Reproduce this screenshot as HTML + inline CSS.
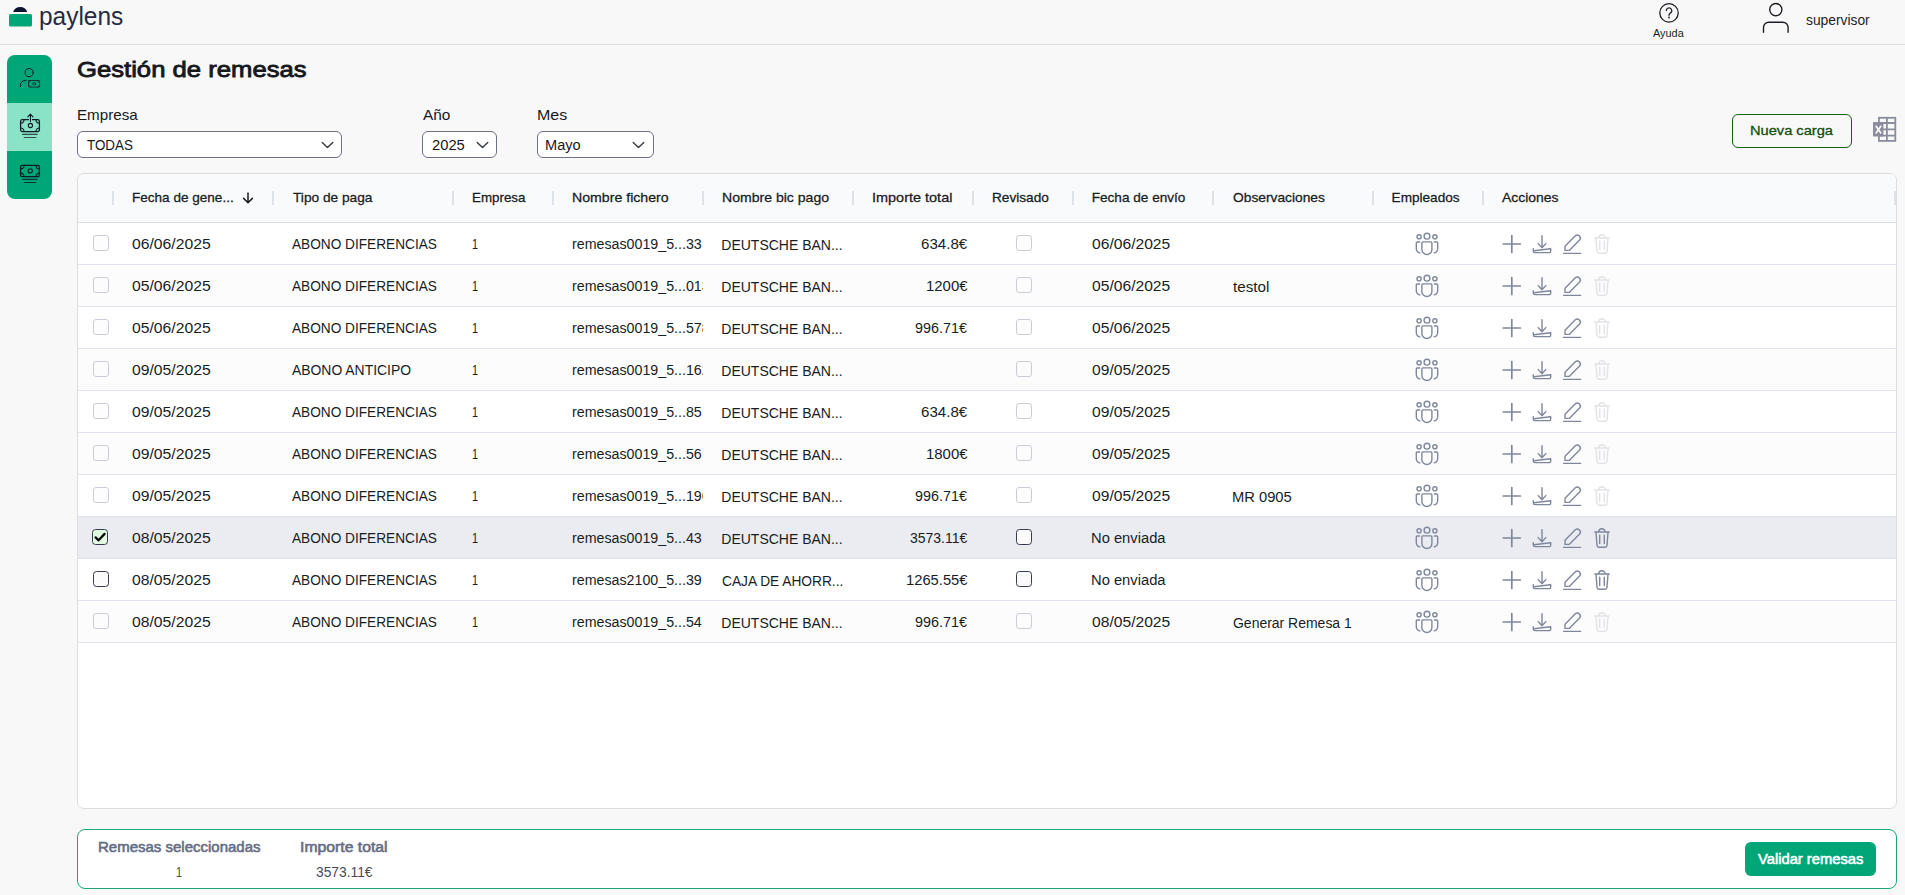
<!DOCTYPE html>
<html lang="es">
<head>
<meta charset="utf-8">
<title>Gestión de remesas - paylens</title>
<style>
*{box-sizing:border-box;margin:0;padding:0}
html,body{width:1905px;height:895px;overflow:hidden}
body{position:relative;background:#f8f8f8;font-family:"Liberation Sans",sans-serif;color:#181d1f;font-size:14px}
span{position:absolute;white-space:nowrap;line-height:1;transform-origin:0 0}
div,svg{position:absolute}
svg{overflow:visible}
.hdrline{left:0;top:44px;width:1905px;height:1px;background:#dcdcdc}
.side{left:7px;top:55px;width:45px;height:144px;border-radius:8px;background:#00a676;overflow:hidden}
.side .act{left:0;top:48px;width:45px;height:48px;background:#8ae3c7}
.sel{height:27px;top:131px;border:1px solid #6c7186;border-radius:6px;background:#fff}
.btn-o{left:1732px;top:114px;width:120px;height:34px;border:1px solid #14600f;border-radius:6px}
.grid{left:77px;top:173px;width:1820px;height:636px;border:1px solid #dddddd;border-radius:7px;background:#fff;overflow:hidden}
.ghead{left:0;top:0;width:1818px;height:49px;background:#f9fafc;border-bottom:1px solid #dfdfdf}
.sep{top:17px;width:2px;height:14px;background:#dde2eb}
.row{left:0;width:1818px;height:42px;border-bottom:1px solid #dde2eb;background:#fff}
.row.alt{background:#fcfcfc}
.row.selr{background:#ebecf1}
.cb{width:16px;height:16px;border:1px solid #cacdd5;border-radius:3px;background:#fdfdfd}
.row.alt .cb{background:#fcfcfc}
.cb.en{border:1.4px solid #363b50;border-radius:3.5px;background:#fbfbfb}
.cb.ck{background:#e2fbe0}
.foot{left:77px;top:829px;width:1820px;height:60px;border:1px solid #1aa67b;border-radius:8px;background:#fff}
.btn-g{left:1745px;top:842px;width:131px;height:34px;border-radius:6px;background:#00a676}
</style>
</head>
<body>
<div class="hdrline"></div>
<svg style="left:0;top:0" width="40" height="40" viewBox="0 0 40 40"><path d="M13.1 11.9 A7.6 7.6 0 0 1 27.3 11.9 Z" fill="#0d1330"/><rect x="9" y="14" width="23" height="12.5" rx="1.6" fill="#00a676"/></svg>
<span style="left:39.04px;top:3.51px;font-size:25.5px;color:#262b40;transform:scaleX(0.9589);">paylens</span>
<svg style="left:1655px;top:0" width="30" height="26" viewBox="1655 0 30 26" fill="none" stroke="#1d1f24" stroke-width="1.3" stroke-linecap="round" stroke-linejoin="round"><circle cx="1669" cy="12.9" r="9.2"/><path d="M1666.3 10.6 a2.75 2.75 0 1 1 4.3 2.3 c-1 .7-1.6 1.2-1.6 2.4"/><circle cx="1669" cy="17.6" r=".35"/></svg>
<span style="left:1653.20px;top:27.59px;font-size:11px;color:#1d1f24;transform:scaleX(0.9914);">Ayuda</span>
<svg style="left:1760px;top:0" width="32" height="36" viewBox="1760 0 32 36" fill="none" stroke="#1d1f24" stroke-width="1.4" stroke-linecap="round"><circle cx="1775.8" cy="9.6" r="6.1"/><path d="M1763.5 32.2 V27.6 a5.3 5.3 0 0 1 5.3 -5.3 H1782.8 a5.3 5.3 0 0 1 5.3 5.3 V32.2"/></svg>
<span style="left:1806.20px;top:13.15px;color:#1d1f24;transform:scaleX(0.9859);">supervisor</span>
<div class="side"><div class="act"></div></div>
<svg style="left:7px;top:55px" width="45" height="48" viewBox="7 55 45 48" fill="none" stroke="#0f1a26" stroke-width="1" stroke-linecap="round"><circle cx="29.2" cy="72.6" r="4.1"/><path d="M20.4 86.6 V85.4 a5 5 0 0 1 5 -5 H26.2"/><rect x="28.6" y="80.5" width="11" height="6.6" rx=".6" stroke-width=".9" stroke-opacity=".85"/><circle cx="34.1" cy="83.8" r="1.4" stroke-width=".8" stroke-opacity=".85"/><path d="M28.6 82.4 a2 2 0 0 0 2 -2 M39.6 82.4 a2 2 0 0 1 -2 -2 M28.6 85.2 a2 2 0 0 1 2 2 M39.6 85.2 a2 2 0 0 0 -2 2" stroke-width=".7" stroke-opacity=".7"/></svg>
<svg style="left:7px;top:103px" width="45" height="48" viewBox="7 103 45 48" fill="none" stroke="#0f1a26" stroke-width="1.1" stroke-linecap="round" stroke-linejoin="round"><path d="M28.4 119.6 H22.4 a1.8 1.8 0 0 0 -1.8 1.8 V129.79999999999998 a1.8 1.8 0 0 0 1.8 1.8 H37.6 a1.8 1.8 0 0 0 1.8 -1.8 V121.39999999999999 a1.8 1.8 0 0 0 -1.8 -1.8 H32.4" stroke-width="1.3"/><path d="M20.6 123.19999999999999 a3.4 3.4 0 0 0 3.4 -3.4 M39.4 123.19999999999999 a3.4 3.4 0 0 1 -3.4 -3.4 M20.6 128.0 a3.4 3.4 0 0 1 3.4 3.4 M39.4 128.0 a3.4 3.4 0 0 0 -3.4 3.4" stroke-width="1.1"/><circle cx="30.4" cy="125.5" r="2.1"/><path d="M30.4 121.6 V114.2 M27.8 116.8 L30.4 114.2 L33 116.8"/><path d="M22.6 134.4 H37.2 M24.2 137.5 H35.8" stroke-opacity=".75"/></svg>
<svg style="left:7px;top:151px" width="45" height="48" viewBox="7 151 45 48" fill="none" stroke="#0f1a26" stroke-width="1.1" stroke-linecap="round" stroke-linejoin="round"><path d="M22.4 165.3 a1.8 1.8 0 0 0 -1.8 1.8 V174.9 a1.8 1.8 0 0 0 1.8 1.8 H37.6 a1.8 1.8 0 0 0 1.8 -1.8 V167.10000000000002 a1.8 1.8 0 0 0 -1.8 -1.8 Z" stroke-width="1.3"/><path d="M20.6 168.9 a3.4 3.4 0 0 0 3.4 -3.4 M39.4 168.9 a3.4 3.4 0 0 1 -3.4 -3.4 M20.6 173.10000000000002 a3.4 3.4 0 0 1 3.4 3.4 M39.4 173.10000000000002 a3.4 3.4 0 0 0 -3.4 3.4" stroke-width="1.1"/><circle cx="30.2" cy="170.8" r="2.1"/><path d="M22.6 179.4 H37 M24.2 182.5 H35.8" stroke-opacity=".8"/></svg>
<span style="left:77.37px;top:58.10px;font-size:22.8px;color:#16181d;transform:scaleX(1.1253);-webkit-text-stroke:0.85px #16181d;">Gestión de remesas</span>
<span style="left:76.59px;top:107.20px;font-size:15px;color:#16181d;transform:scaleX(1.0104);">Empresa</span>
<span style="left:422.60px;top:107.20px;font-size:15px;color:#16181d;transform:scaleX(1.0248);">Año</span>
<span style="left:536.53px;top:107.20px;font-size:15px;color:#16181d;transform:scaleX(1.0694);">Mes</span>
<div class="sel" style="left:77px;width:265px"></div>
<span style="left:87.40px;top:137.75px;color:#16181d;transform:scaleX(0.9572);">TODAS</span>
<svg style="left:320.5px;top:141px" width="13" height="8" viewBox="0 0 13 8" fill="none" stroke="#343a40" stroke-width="1.35" stroke-linecap="round" stroke-linejoin="round"><path d="M1.2 1.4 L6.5 6.6 L11.8 1.4"/></svg>
<div class="sel" style="left:422px;width:75px"></div>
<span style="left:431.60px;top:137.75px;color:#16181d;transform:scaleX(1.0523);">2025</span>
<svg style="left:475.5px;top:141px" width="13" height="8" viewBox="0 0 13 8" fill="none" stroke="#343a40" stroke-width="1.35" stroke-linecap="round" stroke-linejoin="round"><path d="M1.2 1.4 L6.5 6.6 L11.8 1.4"/></svg>
<div class="sel" style="left:537px;width:117px"></div>
<span style="left:545.46px;top:137.75px;color:#16181d;transform:scaleX(1.0404);">Mayo</span>
<svg style="left:632px;top:141px" width="13" height="8" viewBox="0 0 13 8" fill="none" stroke="#343a40" stroke-width="1.35" stroke-linecap="round" stroke-linejoin="round"><path d="M1.2 1.4 L6.5 6.6 L11.8 1.4"/></svg>
<div class="btn-o"></div>
<span style="left:1749.83px;top:124.20px;font-size:13.7px;color:#114d0d;transform:scaleX(1.0689);-webkit-text-stroke:0.3px #114d0d;">Nueva carga</span>
<svg style="left:1870px;top:115px" width="28" height="28" viewBox="1870 115 28 28"><g fill="none" stroke="#8a8d9e" stroke-width="1.8"><rect x="1878.9" y="117.8" width="16.4" height="23.1"/><path d="M1886.9 117.8 V140.9 M1878.9 123 H1895.3 M1878.9 129.3 H1895.3 M1878.9 135.6 H1895.3"/></g><rect x="1873" y="122.1" width="10.4" height="14.5" rx=".6" fill="#8a8d9e"/><path d="M1875.7 125.7 L1881.2 133.5 M1881.2 125.7 L1875.7 133.5" stroke="#f8f8f8" stroke-width="1.7" fill="none"/></svg>
<div class="grid"><div class="ghead"></div>
<div class="sep" style="left:34px"></div>
<div class="sep" style="left:194px"></div>
<div class="sep" style="left:374px"></div>
<div class="sep" style="left:474px"></div>
<div class="sep" style="left:624px"></div>
<div class="sep" style="left:774px"></div>
<div class="sep" style="left:894px"></div>
<div class="sep" style="left:994px"></div>
<div class="sep" style="left:1134px"></div>
<div class="sep" style="left:1294px"></div>
<div class="sep" style="left:1404px"></div>
<div class="sep" style="left:1816px"></div>
<div class="row" style="top:49px"><div class="cb" style="left:15px;top:12px"></div><div class="cb" style="left:938px;top:12px"></div></div>
<div class="row alt" style="top:91px"><div class="cb" style="left:15px;top:12px"></div><div class="cb" style="left:938px;top:12px"></div></div>
<div class="row" style="top:133px"><div class="cb" style="left:15px;top:12px"></div><div class="cb" style="left:938px;top:12px"></div></div>
<div class="row alt" style="top:175px"><div class="cb" style="left:15px;top:12px"></div><div class="cb" style="left:938px;top:12px"></div></div>
<div class="row" style="top:217px"><div class="cb" style="left:15px;top:12px"></div><div class="cb" style="left:938px;top:12px"></div></div>
<div class="row alt" style="top:259px"><div class="cb" style="left:15px;top:12px"></div><div class="cb" style="left:938px;top:12px"></div></div>
<div class="row" style="top:301px"><div class="cb" style="left:15px;top:12px"></div><div class="cb" style="left:938px;top:12px"></div></div>
<div class="row selr" style="top:343px"><div class="cb en ck" style="left:14px;top:12px"></div><div class="cb en" style="left:938px;top:12px"></div></div>
<div class="row" style="top:385px"><div class="cb en" style="left:15px;top:12px"></div><div class="cb en" style="left:938px;top:12px"></div></div>
<div class="row alt" style="top:427px"><div class="cb" style="left:15px;top:12px"></div><div class="cb" style="left:938px;top:12px"></div></div>
</div>
<span style="left:131.80px;top:191.09px;font-size:13.6px;transform:scaleX(0.9965);-webkit-text-stroke:0.28px #181d1f;">Fecha de gene...</span>
<span style="left:292.80px;top:191.09px;font-size:13.6px;transform:scaleX(1.0076);-webkit-text-stroke:0.28px #181d1f;">Tipo de paga</span>
<span style="left:471.62px;top:191.09px;font-size:13.6px;transform:scaleX(0.9826);-webkit-text-stroke:0.28px #181d1f;">Empresa</span>
<span style="left:571.56px;top:191.09px;font-size:13.6px;transform:scaleX(1.0398);-webkit-text-stroke:0.28px #181d1f;">Nombre fichero</span>
<span style="left:721.57px;top:191.09px;font-size:13.6px;transform:scaleX(1.0337);-webkit-text-stroke:0.28px #181d1f;">Nombre bic pago</span>
<span style="left:871.54px;top:191.09px;font-size:13.6px;transform:scaleX(1.0639);-webkit-text-stroke:0.28px #181d1f;">Importe total</span>
<span style="left:991.80px;top:191.09px;font-size:13.6px;transform:scaleX(1.0034);-webkit-text-stroke:0.28px #181d1f;">Revisado</span>
<span style="left:1091.70px;top:191.09px;font-size:13.6px;-webkit-text-stroke:0.28px #181d1f;">Fecha de envío</span>
<span style="left:1232.80px;top:191.09px;font-size:13.6px;transform:scaleX(1.0135);-webkit-text-stroke:0.28px #181d1f;">Observaciones</span>
<span style="left:1391.60px;top:191.09px;font-size:13.6px;-webkit-text-stroke:0.28px #181d1f;">Empleados</span>
<span style="left:1502.30px;top:191.09px;font-size:13.6px;transform:scaleX(1.0242);-webkit-text-stroke:0.28px #181d1f;">Acciones</span>
<svg style="left:240px;top:190px" width="16" height="16" viewBox="240 190 16 16" fill="none" stroke="#181d1f" stroke-width="1.5" stroke-linecap="round" stroke-linejoin="round"><path d="M248 192.9 V202.6 M243.6 198.4 L248 202.8 L252.4 198.4"/></svg>
<span style="left:132.10px;top:236.85px;transform:scaleX(1.1226);">06/06/2025</span>
<span style="left:292.20px;top:236.85px;transform:scaleX(0.9754);">ABONO DIFERENCIAS</span>
<span style="left:471.63px;top:236.85px;transform:scaleX(0.7714);">1</span>
<div style="left:560px;top:223px;width:143px;height:41px;overflow:hidden">
<span style="left:12.40px;top:13.85px;transform:scaleX(1.0168);">remesas0019_5...33</span>
</div>
<span style="left:721.30px;top:237.85px;">DEUTSCHE BAN...</span>
<span style="left:921.00px;top:236.85px;transform:scaleX(1.0782);">634.8€</span>
<span style="left:1092.40px;top:236.85px;transform:scaleX(1.1169);">06/06/2025</span>
<svg style="left:1413px;top:230px" width="28" height="28" viewBox="0 0 28 28" fill="none" stroke="#7f879d" stroke-width="1.4" stroke-linecap="round" stroke-linejoin="round"><circle cx="14" cy="6.2" r="2.9"/><circle cx="6.1" cy="6.8" r="2.1"/><circle cx="21.9" cy="6.8" r="2.1"/><path d="M10.1 11.9 H17.9 a1 1 0 0 1 1 1 V19.5 a5 5 0 0 1 -10 0 V12.9 a1 1 0 0 1 1 -1 Z"/><path d="M6.6 12 H4.3 a1 1 0 0 0 -1 1 V18.4 a4.7 4.7 0 0 0 3.5 4.5 M21.4 12 H23.7 a1 1 0 0 1 1 1 V18.4 a4.7 4.7 0 0 1 -3.5 4.5"/></svg>
<svg style="left:1500px;top:231px" width="114" height="26" viewBox="1500 231 114 26" fill="none" stroke="#7f879d" stroke-width="1.5" stroke-linecap="round" stroke-linejoin="round"><path d="M1503.3 244 H1520.3 M1511.8 235.5 V252.5" stroke-width="1.7"/><path d="M1542 235.6 V247.6 M1538.2 243.6 L1542 247.8 L1545.8 243.6 M1533.3 248.6 V251 a1.6 1.6 0 0 0 1.6 1.6 H1549.1 a1.6 1.6 0 0 0 1.6 -1.6 V248.6 M1534 250.8 L1550.4 248.7" stroke-width="1.4"/><path d="M1565 250.4 V246.2 L1575.3 235.8 a3.05 3.05 0 0 1 4.3 4.3 L1569.2 250.4 Z M1563.6 253.4 H1580.6" stroke-width="1.4"/><path stroke="#e2e3e6" d="M1594.8 238 H1609.2 M1598.8 237.8 a3.2 3 0 0 1 6.4 0 M1596 238.2 L1597 251.4 a2 2 0 0 0 2 1.8 H1605 a2 2 0 0 0 2 -1.8 L1608 238.2 M1599.7 241.2 V249.6 M1604.3 241.2 V249.6" stroke-width="1.4"/></svg>
<span style="left:132.10px;top:278.85px;transform:scaleX(1.1226);">05/06/2025</span>
<span style="left:292.20px;top:278.85px;transform:scaleX(0.9754);">ABONO DIFERENCIAS</span>
<span style="left:471.63px;top:278.85px;transform:scaleX(0.7714);">1</span>
<div style="left:560px;top:265px;width:143px;height:41px;overflow:hidden">
<span style="left:12.40px;top:13.85px;transform:scaleX(1.0168);">remesas0019_5...013</span>
</div>
<span style="left:721.30px;top:279.85px;">DEUTSCHE BAN...</span>
<span style="left:925.63px;top:278.85px;transform:scaleX(1.0670);">1200€</span>
<span style="left:1092.40px;top:278.85px;transform:scaleX(1.1169);">05/06/2025</span>
<span style="left:1232.60px;top:279.85px;transform:scaleX(1.0854);">testol</span>
<svg style="left:1413px;top:272px" width="28" height="28" viewBox="0 0 28 28" fill="none" stroke="#7f879d" stroke-width="1.4" stroke-linecap="round" stroke-linejoin="round"><circle cx="14" cy="6.2" r="2.9"/><circle cx="6.1" cy="6.8" r="2.1"/><circle cx="21.9" cy="6.8" r="2.1"/><path d="M10.1 11.9 H17.9 a1 1 0 0 1 1 1 V19.5 a5 5 0 0 1 -10 0 V12.9 a1 1 0 0 1 1 -1 Z"/><path d="M6.6 12 H4.3 a1 1 0 0 0 -1 1 V18.4 a4.7 4.7 0 0 0 3.5 4.5 M21.4 12 H23.7 a1 1 0 0 1 1 1 V18.4 a4.7 4.7 0 0 1 -3.5 4.5"/></svg>
<svg style="left:1500px;top:273px" width="114" height="26" viewBox="1500 231 114 26" fill="none" stroke="#7f879d" stroke-width="1.5" stroke-linecap="round" stroke-linejoin="round"><path d="M1503.3 244 H1520.3 M1511.8 235.5 V252.5" stroke-width="1.7"/><path d="M1542 235.6 V247.6 M1538.2 243.6 L1542 247.8 L1545.8 243.6 M1533.3 248.6 V251 a1.6 1.6 0 0 0 1.6 1.6 H1549.1 a1.6 1.6 0 0 0 1.6 -1.6 V248.6 M1534 250.8 L1550.4 248.7" stroke-width="1.4"/><path d="M1565 250.4 V246.2 L1575.3 235.8 a3.05 3.05 0 0 1 4.3 4.3 L1569.2 250.4 Z M1563.6 253.4 H1580.6" stroke-width="1.4"/><path stroke="#e2e3e6" d="M1594.8 238 H1609.2 M1598.8 237.8 a3.2 3 0 0 1 6.4 0 M1596 238.2 L1597 251.4 a2 2 0 0 0 2 1.8 H1605 a2 2 0 0 0 2 -1.8 L1608 238.2 M1599.7 241.2 V249.6 M1604.3 241.2 V249.6" stroke-width="1.4"/></svg>
<span style="left:132.10px;top:320.85px;transform:scaleX(1.1226);">05/06/2025</span>
<span style="left:292.20px;top:320.85px;transform:scaleX(0.9754);">ABONO DIFERENCIAS</span>
<span style="left:471.63px;top:320.85px;transform:scaleX(0.7714);">1</span>
<div style="left:560px;top:307px;width:143px;height:41px;overflow:hidden">
<span style="left:12.40px;top:13.85px;transform:scaleX(1.0168);">remesas0019_5...578</span>
</div>
<span style="left:721.30px;top:321.85px;">DEUTSCHE BAN...</span>
<span style="left:915.30px;top:320.85px;transform:scaleX(1.0252);">996.71€</span>
<span style="left:1092.40px;top:320.85px;transform:scaleX(1.1169);">05/06/2025</span>
<svg style="left:1413px;top:314px" width="28" height="28" viewBox="0 0 28 28" fill="none" stroke="#7f879d" stroke-width="1.4" stroke-linecap="round" stroke-linejoin="round"><circle cx="14" cy="6.2" r="2.9"/><circle cx="6.1" cy="6.8" r="2.1"/><circle cx="21.9" cy="6.8" r="2.1"/><path d="M10.1 11.9 H17.9 a1 1 0 0 1 1 1 V19.5 a5 5 0 0 1 -10 0 V12.9 a1 1 0 0 1 1 -1 Z"/><path d="M6.6 12 H4.3 a1 1 0 0 0 -1 1 V18.4 a4.7 4.7 0 0 0 3.5 4.5 M21.4 12 H23.7 a1 1 0 0 1 1 1 V18.4 a4.7 4.7 0 0 1 -3.5 4.5"/></svg>
<svg style="left:1500px;top:315px" width="114" height="26" viewBox="1500 231 114 26" fill="none" stroke="#7f879d" stroke-width="1.5" stroke-linecap="round" stroke-linejoin="round"><path d="M1503.3 244 H1520.3 M1511.8 235.5 V252.5" stroke-width="1.7"/><path d="M1542 235.6 V247.6 M1538.2 243.6 L1542 247.8 L1545.8 243.6 M1533.3 248.6 V251 a1.6 1.6 0 0 0 1.6 1.6 H1549.1 a1.6 1.6 0 0 0 1.6 -1.6 V248.6 M1534 250.8 L1550.4 248.7" stroke-width="1.4"/><path d="M1565 250.4 V246.2 L1575.3 235.8 a3.05 3.05 0 0 1 4.3 4.3 L1569.2 250.4 Z M1563.6 253.4 H1580.6" stroke-width="1.4"/><path stroke="#e2e3e6" d="M1594.8 238 H1609.2 M1598.8 237.8 a3.2 3 0 0 1 6.4 0 M1596 238.2 L1597 251.4 a2 2 0 0 0 2 1.8 H1605 a2 2 0 0 0 2 -1.8 L1608 238.2 M1599.7 241.2 V249.6 M1604.3 241.2 V249.6" stroke-width="1.4"/></svg>
<span style="left:132.10px;top:362.85px;transform:scaleX(1.1226);">09/05/2025</span>
<span style="left:292.20px;top:362.85px;transform:scaleX(0.9935);">ABONO ANTICIPO</span>
<span style="left:471.63px;top:362.85px;transform:scaleX(0.7714);">1</span>
<div style="left:560px;top:349px;width:143px;height:41px;overflow:hidden">
<span style="left:12.40px;top:13.85px;transform:scaleX(1.0168);">remesas0019_5...162</span>
</div>
<span style="left:721.30px;top:363.85px;">DEUTSCHE BAN...</span>
<span style="left:1092.40px;top:362.85px;transform:scaleX(1.1169);">09/05/2025</span>
<svg style="left:1413px;top:356px" width="28" height="28" viewBox="0 0 28 28" fill="none" stroke="#7f879d" stroke-width="1.4" stroke-linecap="round" stroke-linejoin="round"><circle cx="14" cy="6.2" r="2.9"/><circle cx="6.1" cy="6.8" r="2.1"/><circle cx="21.9" cy="6.8" r="2.1"/><path d="M10.1 11.9 H17.9 a1 1 0 0 1 1 1 V19.5 a5 5 0 0 1 -10 0 V12.9 a1 1 0 0 1 1 -1 Z"/><path d="M6.6 12 H4.3 a1 1 0 0 0 -1 1 V18.4 a4.7 4.7 0 0 0 3.5 4.5 M21.4 12 H23.7 a1 1 0 0 1 1 1 V18.4 a4.7 4.7 0 0 1 -3.5 4.5"/></svg>
<svg style="left:1500px;top:357px" width="114" height="26" viewBox="1500 231 114 26" fill="none" stroke="#7f879d" stroke-width="1.5" stroke-linecap="round" stroke-linejoin="round"><path d="M1503.3 244 H1520.3 M1511.8 235.5 V252.5" stroke-width="1.7"/><path d="M1542 235.6 V247.6 M1538.2 243.6 L1542 247.8 L1545.8 243.6 M1533.3 248.6 V251 a1.6 1.6 0 0 0 1.6 1.6 H1549.1 a1.6 1.6 0 0 0 1.6 -1.6 V248.6 M1534 250.8 L1550.4 248.7" stroke-width="1.4"/><path d="M1565 250.4 V246.2 L1575.3 235.8 a3.05 3.05 0 0 1 4.3 4.3 L1569.2 250.4 Z M1563.6 253.4 H1580.6" stroke-width="1.4"/><path stroke="#e2e3e6" d="M1594.8 238 H1609.2 M1598.8 237.8 a3.2 3 0 0 1 6.4 0 M1596 238.2 L1597 251.4 a2 2 0 0 0 2 1.8 H1605 a2 2 0 0 0 2 -1.8 L1608 238.2 M1599.7 241.2 V249.6 M1604.3 241.2 V249.6" stroke-width="1.4"/></svg>
<span style="left:132.10px;top:404.85px;transform:scaleX(1.1226);">09/05/2025</span>
<span style="left:292.20px;top:404.85px;transform:scaleX(0.9754);">ABONO DIFERENCIAS</span>
<span style="left:471.63px;top:404.85px;transform:scaleX(0.7714);">1</span>
<div style="left:560px;top:391px;width:143px;height:41px;overflow:hidden">
<span style="left:12.40px;top:13.85px;transform:scaleX(1.0168);">remesas0019_5...85</span>
</div>
<span style="left:721.30px;top:405.85px;">DEUTSCHE BAN...</span>
<span style="left:921.00px;top:404.85px;transform:scaleX(1.0782);">634.8€</span>
<span style="left:1092.40px;top:404.85px;transform:scaleX(1.1169);">09/05/2025</span>
<svg style="left:1413px;top:398px" width="28" height="28" viewBox="0 0 28 28" fill="none" stroke="#7f879d" stroke-width="1.4" stroke-linecap="round" stroke-linejoin="round"><circle cx="14" cy="6.2" r="2.9"/><circle cx="6.1" cy="6.8" r="2.1"/><circle cx="21.9" cy="6.8" r="2.1"/><path d="M10.1 11.9 H17.9 a1 1 0 0 1 1 1 V19.5 a5 5 0 0 1 -10 0 V12.9 a1 1 0 0 1 1 -1 Z"/><path d="M6.6 12 H4.3 a1 1 0 0 0 -1 1 V18.4 a4.7 4.7 0 0 0 3.5 4.5 M21.4 12 H23.7 a1 1 0 0 1 1 1 V18.4 a4.7 4.7 0 0 1 -3.5 4.5"/></svg>
<svg style="left:1500px;top:399px" width="114" height="26" viewBox="1500 231 114 26" fill="none" stroke="#7f879d" stroke-width="1.5" stroke-linecap="round" stroke-linejoin="round"><path d="M1503.3 244 H1520.3 M1511.8 235.5 V252.5" stroke-width="1.7"/><path d="M1542 235.6 V247.6 M1538.2 243.6 L1542 247.8 L1545.8 243.6 M1533.3 248.6 V251 a1.6 1.6 0 0 0 1.6 1.6 H1549.1 a1.6 1.6 0 0 0 1.6 -1.6 V248.6 M1534 250.8 L1550.4 248.7" stroke-width="1.4"/><path d="M1565 250.4 V246.2 L1575.3 235.8 a3.05 3.05 0 0 1 4.3 4.3 L1569.2 250.4 Z M1563.6 253.4 H1580.6" stroke-width="1.4"/><path stroke="#e2e3e6" d="M1594.8 238 H1609.2 M1598.8 237.8 a3.2 3 0 0 1 6.4 0 M1596 238.2 L1597 251.4 a2 2 0 0 0 2 1.8 H1605 a2 2 0 0 0 2 -1.8 L1608 238.2 M1599.7 241.2 V249.6 M1604.3 241.2 V249.6" stroke-width="1.4"/></svg>
<span style="left:132.10px;top:446.85px;transform:scaleX(1.1226);">09/05/2025</span>
<span style="left:292.20px;top:446.85px;transform:scaleX(0.9754);">ABONO DIFERENCIAS</span>
<span style="left:471.63px;top:446.85px;transform:scaleX(0.7714);">1</span>
<div style="left:560px;top:433px;width:143px;height:41px;overflow:hidden">
<span style="left:12.40px;top:13.85px;transform:scaleX(1.0168);">remesas0019_5...56</span>
</div>
<span style="left:721.30px;top:447.85px;">DEUTSCHE BAN...</span>
<span style="left:925.63px;top:446.85px;transform:scaleX(1.0670);">1800€</span>
<span style="left:1092.40px;top:446.85px;transform:scaleX(1.1169);">09/05/2025</span>
<svg style="left:1413px;top:440px" width="28" height="28" viewBox="0 0 28 28" fill="none" stroke="#7f879d" stroke-width="1.4" stroke-linecap="round" stroke-linejoin="round"><circle cx="14" cy="6.2" r="2.9"/><circle cx="6.1" cy="6.8" r="2.1"/><circle cx="21.9" cy="6.8" r="2.1"/><path d="M10.1 11.9 H17.9 a1 1 0 0 1 1 1 V19.5 a5 5 0 0 1 -10 0 V12.9 a1 1 0 0 1 1 -1 Z"/><path d="M6.6 12 H4.3 a1 1 0 0 0 -1 1 V18.4 a4.7 4.7 0 0 0 3.5 4.5 M21.4 12 H23.7 a1 1 0 0 1 1 1 V18.4 a4.7 4.7 0 0 1 -3.5 4.5"/></svg>
<svg style="left:1500px;top:441px" width="114" height="26" viewBox="1500 231 114 26" fill="none" stroke="#7f879d" stroke-width="1.5" stroke-linecap="round" stroke-linejoin="round"><path d="M1503.3 244 H1520.3 M1511.8 235.5 V252.5" stroke-width="1.7"/><path d="M1542 235.6 V247.6 M1538.2 243.6 L1542 247.8 L1545.8 243.6 M1533.3 248.6 V251 a1.6 1.6 0 0 0 1.6 1.6 H1549.1 a1.6 1.6 0 0 0 1.6 -1.6 V248.6 M1534 250.8 L1550.4 248.7" stroke-width="1.4"/><path d="M1565 250.4 V246.2 L1575.3 235.8 a3.05 3.05 0 0 1 4.3 4.3 L1569.2 250.4 Z M1563.6 253.4 H1580.6" stroke-width="1.4"/><path stroke="#e2e3e6" d="M1594.8 238 H1609.2 M1598.8 237.8 a3.2 3 0 0 1 6.4 0 M1596 238.2 L1597 251.4 a2 2 0 0 0 2 1.8 H1605 a2 2 0 0 0 2 -1.8 L1608 238.2 M1599.7 241.2 V249.6 M1604.3 241.2 V249.6" stroke-width="1.4"/></svg>
<span style="left:132.10px;top:488.85px;transform:scaleX(1.1226);">09/05/2025</span>
<span style="left:292.20px;top:488.85px;transform:scaleX(0.9754);">ABONO DIFERENCIAS</span>
<span style="left:471.63px;top:488.85px;transform:scaleX(0.7714);">1</span>
<div style="left:560px;top:475px;width:143px;height:41px;overflow:hidden">
<span style="left:12.40px;top:13.85px;transform:scaleX(1.0168);">remesas0019_5...196</span>
</div>
<span style="left:721.30px;top:489.85px;">DEUTSCHE BAN...</span>
<span style="left:915.30px;top:488.85px;transform:scaleX(1.0252);">996.71€</span>
<span style="left:1092.40px;top:488.85px;transform:scaleX(1.1169);">09/05/2025</span>
<span style="left:1231.55px;top:489.85px;transform:scaleX(1.0514);">MR 0905</span>
<svg style="left:1413px;top:482px" width="28" height="28" viewBox="0 0 28 28" fill="none" stroke="#7f879d" stroke-width="1.4" stroke-linecap="round" stroke-linejoin="round"><circle cx="14" cy="6.2" r="2.9"/><circle cx="6.1" cy="6.8" r="2.1"/><circle cx="21.9" cy="6.8" r="2.1"/><path d="M10.1 11.9 H17.9 a1 1 0 0 1 1 1 V19.5 a5 5 0 0 1 -10 0 V12.9 a1 1 0 0 1 1 -1 Z"/><path d="M6.6 12 H4.3 a1 1 0 0 0 -1 1 V18.4 a4.7 4.7 0 0 0 3.5 4.5 M21.4 12 H23.7 a1 1 0 0 1 1 1 V18.4 a4.7 4.7 0 0 1 -3.5 4.5"/></svg>
<svg style="left:1500px;top:483px" width="114" height="26" viewBox="1500 231 114 26" fill="none" stroke="#7f879d" stroke-width="1.5" stroke-linecap="round" stroke-linejoin="round"><path d="M1503.3 244 H1520.3 M1511.8 235.5 V252.5" stroke-width="1.7"/><path d="M1542 235.6 V247.6 M1538.2 243.6 L1542 247.8 L1545.8 243.6 M1533.3 248.6 V251 a1.6 1.6 0 0 0 1.6 1.6 H1549.1 a1.6 1.6 0 0 0 1.6 -1.6 V248.6 M1534 250.8 L1550.4 248.7" stroke-width="1.4"/><path d="M1565 250.4 V246.2 L1575.3 235.8 a3.05 3.05 0 0 1 4.3 4.3 L1569.2 250.4 Z M1563.6 253.4 H1580.6" stroke-width="1.4"/><path stroke="#e2e3e6" d="M1594.8 238 H1609.2 M1598.8 237.8 a3.2 3 0 0 1 6.4 0 M1596 238.2 L1597 251.4 a2 2 0 0 0 2 1.8 H1605 a2 2 0 0 0 2 -1.8 L1608 238.2 M1599.7 241.2 V249.6 M1604.3 241.2 V249.6" stroke-width="1.4"/></svg>
<span style="left:132.10px;top:530.85px;transform:scaleX(1.1226);">08/05/2025</span>
<span style="left:292.20px;top:530.85px;transform:scaleX(0.9754);">ABONO DIFERENCIAS</span>
<span style="left:471.63px;top:530.85px;transform:scaleX(0.7714);">1</span>
<div style="left:560px;top:517px;width:143px;height:41px;overflow:hidden">
<span style="left:12.40px;top:13.85px;transform:scaleX(1.0168);">remesas0019_5...43</span>
</div>
<span style="left:721.30px;top:531.85px;">DEUTSCHE BAN...</span>
<span style="left:909.90px;top:530.85px;">3573.11€</span>
<span style="left:1091.35px;top:530.85px;transform:scaleX(1.0522);">No enviada</span>
<svg style="left:1413px;top:524px" width="28" height="28" viewBox="0 0 28 28" fill="none" stroke="#7f879d" stroke-width="1.4" stroke-linecap="round" stroke-linejoin="round"><circle cx="14" cy="6.2" r="2.9"/><circle cx="6.1" cy="6.8" r="2.1"/><circle cx="21.9" cy="6.8" r="2.1"/><path d="M10.1 11.9 H17.9 a1 1 0 0 1 1 1 V19.5 a5 5 0 0 1 -10 0 V12.9 a1 1 0 0 1 1 -1 Z"/><path d="M6.6 12 H4.3 a1 1 0 0 0 -1 1 V18.4 a4.7 4.7 0 0 0 3.5 4.5 M21.4 12 H23.7 a1 1 0 0 1 1 1 V18.4 a4.7 4.7 0 0 1 -3.5 4.5"/></svg>
<svg style="left:1500px;top:525px" width="114" height="26" viewBox="1500 231 114 26" fill="none" stroke="#7f879d" stroke-width="1.5" stroke-linecap="round" stroke-linejoin="round"><path d="M1503.3 244 H1520.3 M1511.8 235.5 V252.5" stroke-width="1.7"/><path d="M1542 235.6 V247.6 M1538.2 243.6 L1542 247.8 L1545.8 243.6 M1533.3 248.6 V251 a1.6 1.6 0 0 0 1.6 1.6 H1549.1 a1.6 1.6 0 0 0 1.6 -1.6 V248.6 M1534 250.8 L1550.4 248.7" stroke-width="1.4"/><path d="M1565 250.4 V246.2 L1575.3 235.8 a3.05 3.05 0 0 1 4.3 4.3 L1569.2 250.4 Z M1563.6 253.4 H1580.6" stroke-width="1.4"/><path stroke="#7f879d" d="M1594.8 238 H1609.2 M1598.8 237.8 a3.2 3 0 0 1 6.4 0 M1596 238.2 L1597 251.4 a2 2 0 0 0 2 1.8 H1605 a2 2 0 0 0 2 -1.8 L1608 238.2 M1599.7 241.2 V249.6 M1604.3 241.2 V249.6" stroke-width="1.4"/></svg>
<span style="left:132.10px;top:572.85px;transform:scaleX(1.1226);">08/05/2025</span>
<span style="left:292.20px;top:572.85px;transform:scaleX(0.9754);">ABONO DIFERENCIAS</span>
<span style="left:471.63px;top:572.85px;transform:scaleX(0.7714);">1</span>
<div style="left:560px;top:559px;width:143px;height:41px;overflow:hidden">
<span style="left:12.40px;top:13.85px;transform:scaleX(1.0168);">remesas2100_5...39</span>
</div>
<span style="left:722.30px;top:573.85px;transform:scaleX(0.9803);">CAJA DE AHORR...</span>
<span style="left:905.65px;top:572.85px;transform:scaleX(1.0537);">1265.55€</span>
<span style="left:1091.35px;top:572.85px;transform:scaleX(1.0522);">No enviada</span>
<svg style="left:1413px;top:566px" width="28" height="28" viewBox="0 0 28 28" fill="none" stroke="#7f879d" stroke-width="1.4" stroke-linecap="round" stroke-linejoin="round"><circle cx="14" cy="6.2" r="2.9"/><circle cx="6.1" cy="6.8" r="2.1"/><circle cx="21.9" cy="6.8" r="2.1"/><path d="M10.1 11.9 H17.9 a1 1 0 0 1 1 1 V19.5 a5 5 0 0 1 -10 0 V12.9 a1 1 0 0 1 1 -1 Z"/><path d="M6.6 12 H4.3 a1 1 0 0 0 -1 1 V18.4 a4.7 4.7 0 0 0 3.5 4.5 M21.4 12 H23.7 a1 1 0 0 1 1 1 V18.4 a4.7 4.7 0 0 1 -3.5 4.5"/></svg>
<svg style="left:1500px;top:567px" width="114" height="26" viewBox="1500 231 114 26" fill="none" stroke="#7f879d" stroke-width="1.5" stroke-linecap="round" stroke-linejoin="round"><path d="M1503.3 244 H1520.3 M1511.8 235.5 V252.5" stroke-width="1.7"/><path d="M1542 235.6 V247.6 M1538.2 243.6 L1542 247.8 L1545.8 243.6 M1533.3 248.6 V251 a1.6 1.6 0 0 0 1.6 1.6 H1549.1 a1.6 1.6 0 0 0 1.6 -1.6 V248.6 M1534 250.8 L1550.4 248.7" stroke-width="1.4"/><path d="M1565 250.4 V246.2 L1575.3 235.8 a3.05 3.05 0 0 1 4.3 4.3 L1569.2 250.4 Z M1563.6 253.4 H1580.6" stroke-width="1.4"/><path stroke="#7f879d" d="M1594.8 238 H1609.2 M1598.8 237.8 a3.2 3 0 0 1 6.4 0 M1596 238.2 L1597 251.4 a2 2 0 0 0 2 1.8 H1605 a2 2 0 0 0 2 -1.8 L1608 238.2 M1599.7 241.2 V249.6 M1604.3 241.2 V249.6" stroke-width="1.4"/></svg>
<span style="left:132.10px;top:614.85px;transform:scaleX(1.1226);">08/05/2025</span>
<span style="left:292.20px;top:614.85px;transform:scaleX(0.9754);">ABONO DIFERENCIAS</span>
<span style="left:471.63px;top:614.85px;transform:scaleX(0.7714);">1</span>
<div style="left:560px;top:601px;width:143px;height:41px;overflow:hidden">
<span style="left:12.40px;top:13.85px;transform:scaleX(1.0168);">remesas0019_5...54</span>
</div>
<span style="left:721.30px;top:615.85px;">DEUTSCHE BAN...</span>
<span style="left:915.30px;top:614.85px;transform:scaleX(1.0252);">996.71€</span>
<span style="left:1092.40px;top:614.85px;transform:scaleX(1.1169);">08/05/2025</span>
<span style="left:1232.60px;top:615.85px;transform:scaleX(0.9977);">Generar Remesa 1</span>
<svg style="left:1413px;top:608px" width="28" height="28" viewBox="0 0 28 28" fill="none" stroke="#7f879d" stroke-width="1.4" stroke-linecap="round" stroke-linejoin="round"><circle cx="14" cy="6.2" r="2.9"/><circle cx="6.1" cy="6.8" r="2.1"/><circle cx="21.9" cy="6.8" r="2.1"/><path d="M10.1 11.9 H17.9 a1 1 0 0 1 1 1 V19.5 a5 5 0 0 1 -10 0 V12.9 a1 1 0 0 1 1 -1 Z"/><path d="M6.6 12 H4.3 a1 1 0 0 0 -1 1 V18.4 a4.7 4.7 0 0 0 3.5 4.5 M21.4 12 H23.7 a1 1 0 0 1 1 1 V18.4 a4.7 4.7 0 0 1 -3.5 4.5"/></svg>
<svg style="left:1500px;top:609px" width="114" height="26" viewBox="1500 231 114 26" fill="none" stroke="#7f879d" stroke-width="1.5" stroke-linecap="round" stroke-linejoin="round"><path d="M1503.3 244 H1520.3 M1511.8 235.5 V252.5" stroke-width="1.7"/><path d="M1542 235.6 V247.6 M1538.2 243.6 L1542 247.8 L1545.8 243.6 M1533.3 248.6 V251 a1.6 1.6 0 0 0 1.6 1.6 H1549.1 a1.6 1.6 0 0 0 1.6 -1.6 V248.6 M1534 250.8 L1550.4 248.7" stroke-width="1.4"/><path d="M1565 250.4 V246.2 L1575.3 235.8 a3.05 3.05 0 0 1 4.3 4.3 L1569.2 250.4 Z M1563.6 253.4 H1580.6" stroke-width="1.4"/><path stroke="#e2e3e6" d="M1594.8 238 H1609.2 M1598.8 237.8 a3.2 3 0 0 1 6.4 0 M1596 238.2 L1597 251.4 a2 2 0 0 0 2 1.8 H1605 a2 2 0 0 0 2 -1.8 L1608 238.2 M1599.7 241.2 V249.6 M1604.3 241.2 V249.6" stroke-width="1.4"/></svg>
<svg style="left:92px;top:529px" width="16" height="16" viewBox="0 0 16 16" fill="none" stroke="#0a0a0a" stroke-width="2.3" stroke-linecap="round" stroke-linejoin="round"><path d="M3.6 8.4 L6.6 11.3 L12.6 4.9"/></svg>
<div class="foot"></div>
<span style="left:97.53px;top:839.75px;color:#666c84;transform:scaleX(1.0707);-webkit-text-stroke:0.55px #666c84;">Remesas seleccionadas</span>
<span style="left:175.53px;top:865.15px;color:#484b55;transform:scaleX(0.7714);">1</span>
<span style="left:299.77px;top:839.75px;color:#666c84;transform:scaleX(1.1251);-webkit-text-stroke:0.55px #666c84;">Importe total</span>
<span style="left:315.70px;top:865.15px;color:#484b55;transform:scaleX(0.9849);">3573.11€</span>
<div class="btn-g"></div>
<span style="left:1758.30px;top:851.55px;color:#ffffff;transform:scaleX(1.0518);-webkit-text-stroke:0.55px #ffffff;">Validar remesas</span>
</body>
</html>
